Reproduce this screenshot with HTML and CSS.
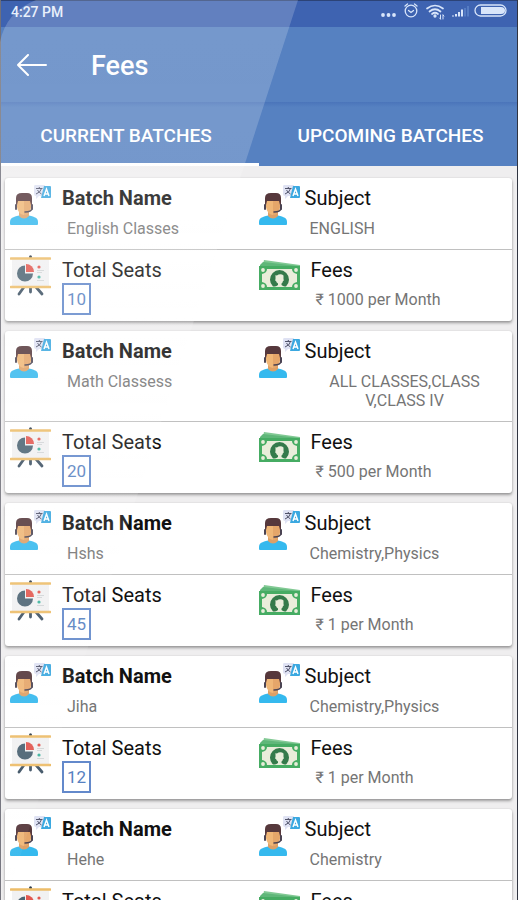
FILE: index.html
```html
<!DOCTYPE html>
<html lang="en">
<head>
<meta charset="utf-8">
<meta name="viewport" content="width=device-width, initial-scale=1">
<title>Fees</title>
<link rel="stylesheet" href="styles.css">
</head>
<body>
<svg class="sprite" aria-hidden="true">
  <symbol id="tutor" viewBox="0 0 41 41">
    <path d="M0 39v-2c0-4 3-5 9-6.500h10c6 1.500 9 2.500 9 6.500v2q0 1-1 1H1q-1 0-1-1z" fill="#35b9ee"/>
    <path d="M9 26h10v5q-5 5-10 0z" fill="#dda066"/>
    <path d="M7 14h14v8q-1 7-7 8-6-1-7-8z" fill="#f0b777"/>
    <path d="M14 13h7v9q-1 7-7 8z" fill="#e5a66a"/>
    <path d="M6 20V13q0-5 6-5h5q5 0 5 5v7h-1l-1-4H8l-1 4z" fill="#56383c"/>
    <rect x="5" y="19" width="2" height="6" rx="1" fill="#4b4453"/>
    <rect x="21" y="19" width="2" height="6" rx="1" fill="#4b4453"/>
    <path d="M22 23q0 4-7 4" fill="none" stroke="#4b4453" stroke-width="1.500" stroke-linecap="round"/>
    <path d="M25 0h10l-3 11h-3l-3 3v-3q-2 0-2-2V2q0-2 1-2z" fill="#dfe2f3"/>
    <path d="M34 1h6q1 0 1 1v10q0 1-1 1H31z" fill="#3ba8e0"/>
    <path d="M26 3.500h6.500M29.300 2v1.500M31.500 3.500q-1 4-5.500 5.500M27.500 5q2 3 4 4" fill="none" stroke="#50536a"/>
    <path d="M34 11l2.500-7L39 11M35 9h3" fill="none" stroke="#fff" stroke-width="1.400"/>
  </symbol>
  <symbol id="board" viewBox="0 0 41 41">
    <path d="M14 32l-5 7M26 32l6 7M20.500 32v5" stroke="#3d5163" stroke-width="2.800" stroke-linecap="round"/>
    <circle cx="20.500" cy="1.800" r="1.500" fill="#2f3c48"/>
    <path d="M2 4h37v27H2z" fill="#f1f1f2"/>
    <path d="M1 3.500h39M1 32h39" stroke="#edbd69" stroke-width="2.600" stroke-linecap="round"/>
    <path d="M15 10.500v8h8a8 8 0 1 1-8-8z" fill="#4c6473"/>
    <path d="M16 9a8 8 0 0 1 8 8h-8z" fill="#e2574f"/>
    <circle cx="29" cy="12" r="1.600" fill="#e2574f"/>
    <circle cx="29" cy="22" r="1.600" fill="#3db39e"/>
    <path d="M27 15.500h7M27 17.500h5M27 25.500h7" stroke="#d2d5d7"/>
  </symbol>
  <symbol id="cash" viewBox="0 0 41 41">
    <path d="M5 5l36 5v4H3z" fill="#82c994"/>
    <path d="M1 10l3-3 36 4v3H1z" fill="#5fb779"/>
    <path d="M0 11h41v24H0z" fill="#46ac63"/>
    <path d="M8 14h25q0 4 5 5v8q-5 1-5 5H8q0-4-5-5v-8q5-1 5-5z" fill="#e9edda"/>
    <g fill="#e9edda"><circle cx="4" cy="15" r="1.900"/><circle cx="37" cy="15" r="1.900"/><circle cx="4" cy="31" r="1.900"/><circle cx="37" cy="31" r="1.900"/></g>
    <path d="M14 31.500a9.500 9.500 0 1 1 13 0z" fill="#347a4a"/>
    <path d="M16.500 20q1 1 3-.5 3-1 5 1v3.500q1 2-.5 2-.5 2-1.500 2.500v1.500l3 2H16l3-2v-1.500q-1.500-1-2-2.500-1.500 0-.5-2z" fill="#e9edda"/>
  </symbol>
</svg>
<div class="app">
  <div class="status">
    <span>4:27 PM</span>
    <svg class="status-icons" viewBox="0 0 128 20" fill="none" stroke="#d8e5fa" stroke-width="1.300" stroke-linecap="round" aria-hidden="true">
      <g fill="#d8e5fa" stroke="none"><circle cx="3" cy="11" r="1.900"/><circle cx="8.500" cy="11" r="1.900"/><circle cx="14" cy="11" r="1.900"/></g>
      <circle cx="31" cy="7" r="5.800"/><path d="M28.500 6.500l2.500 2 2.500-2M25 2l2.500-2M37 2l-2.500-2"/>
      <path d="M47 4.500q8-6 16 0M49.500 7.500q5.500-4.500 11 0M52 10q3-2.500 6 0" stroke-width="1.700"/><circle cx="55" cy="12" r="1" fill="#d8e5fa"/>
      <path d="M60.500 11v4M59.500 14l1 1M63 15v-4M64 12l-1-1" stroke-width="1"/>
      <path d="M73 12.500V11.500M76 12.500V10M79 12.500V8M82 12.500V5.500" stroke-width="2" stroke-linecap="butt"/><path d="M85 12.500V4M88 12.500V2" stroke="#557cc3" stroke-width="2" stroke-linecap="butt"/>
      <rect x="95" y="1" width="31" height="11" rx="5.500"/><path d="M101 3h20q4 0 4 3.500t-4 3.500h-20z" fill="#d8e5fa" stroke="none"/>
    </svg>
  </div>
  <header class="toolbar">
    <button class="back" type="button" aria-label="Back"><svg viewBox="0 0 30 22" fill="none" stroke="#fff" stroke-width="2" stroke-linecap="round" stroke-linejoin="round"><path d="M11 1L1 11l10 10M1 11h28"/></svg></button>
    <h1>Fees</h1>
  </header>
  <nav class="tabs" aria-label="Batches">
    <button class="tab active" type="button">CURRENT BATCHES</button>
    <button class="tab" type="button">UPCOMING BATCHES</button>
  </nav>
  <main class="list">
    <article class="card">
      <section class="cell"><svg class="icon"><use href="#tutor"/></svg><div class="text"><h2 class="name">Batch Name</h2><p>English Classes</p></div></section>
      <section class="cell subject"><svg class="icon"><use href="#tutor"/></svg><div class="text"><h2>Subject</h2><p>ENGLISH</p></div></section>
      <section class="cell lower"><svg class="icon"><use href="#board"/></svg><div class="text"><h2>Total Seats</h2><span class="seats">10</span></div></section>
      <section class="cell lower fees"><svg class="icon"><use href="#cash"/></svg><div class="text"><h2>Fees</h2><p>₹ 1000 per Month</p></div></section>
    </article>
    <article class="card">
      <section class="cell"><svg class="icon"><use href="#tutor"/></svg><div class="text"><h2 class="name">Batch Name</h2><p>Math Classess</p></div></section>
      <section class="cell subject"><svg class="icon"><use href="#tutor"/></svg><div class="text"><h2>Subject</h2><p class="many">ALL CLASSES,CLASS V,CLASS IV</p></div></section>
      <section class="cell lower"><svg class="icon"><use href="#board"/></svg><div class="text"><h2>Total Seats</h2><span class="seats">20</span></div></section>
      <section class="cell lower fees"><svg class="icon"><use href="#cash"/></svg><div class="text"><h2>Fees</h2><p>₹ 500 per Month</p></div></section>
    </article>
    <article class="card">
      <section class="cell"><svg class="icon"><use href="#tutor"/></svg><div class="text"><h2 class="name">Batch Name</h2><p>Hshs</p></div></section>
      <section class="cell subject"><svg class="icon"><use href="#tutor"/></svg><div class="text"><h2>Subject</h2><p>Chemistry,Physics</p></div></section>
      <section class="cell lower"><svg class="icon"><use href="#board"/></svg><div class="text"><h2>Total Seats</h2><span class="seats">45</span></div></section>
      <section class="cell lower fees"><svg class="icon"><use href="#cash"/></svg><div class="text"><h2>Fees</h2><p>₹ 1 per Month</p></div></section>
    </article>
    <article class="card">
      <section class="cell"><svg class="icon"><use href="#tutor"/></svg><div class="text"><h2 class="name">Batch Name</h2><p>Jiha</p></div></section>
      <section class="cell subject"><svg class="icon"><use href="#tutor"/></svg><div class="text"><h2>Subject</h2><p>Chemistry,Physics</p></div></section>
      <section class="cell lower"><svg class="icon"><use href="#board"/></svg><div class="text"><h2>Total Seats</h2><span class="seats">12</span></div></section>
      <section class="cell lower fees"><svg class="icon"><use href="#cash"/></svg><div class="text"><h2>Fees</h2><p>₹ 1 per Month</p></div></section>
    </article>
    <article class="card">
      <section class="cell"><svg class="icon"><use href="#tutor"/></svg><div class="text"><h2 class="name">Batch Name</h2><p>Hehe</p></div></section>
      <section class="cell subject"><svg class="icon"><use href="#tutor"/></svg><div class="text"><h2>Subject</h2><p>Chemistry</p></div></section>
      <section class="cell lower"><svg class="icon"><use href="#board"/></svg><div class="text"><h2>Total Seats</h2></div></section>
      <section class="cell lower fees"><svg class="icon"><use href="#cash"/></svg><div class="text"><h2>Fees</h2></div></section>
    </article>
  </main>
</div>
<svg class="glare" viewBox="0 0 518 900" preserveAspectRatio="none" aria-hidden="true">
  <defs><linearGradient id="shine" x1="0" y1="0" x2="0" y2="1"><stop offset="0" stop-color="#fff" stop-opacity=".19"/><stop offset=".25" stop-color="#fff" stop-opacity=".18"/><stop offset="1" stop-color="#fff" stop-opacity=".04"/></linearGradient></defs>
  <path d="M36 0H298L6 900H0V42Q6 12 36 0z" fill="url(#shine)"/>
</svg>
</body>
</html>
```
FILE: styles.css
```css
* { box-sizing: border-box; }
body { margin: 0; font-family: Roboto, "Noto Sans", sans-serif; color: #111; }
h1, h2, p { margin: 0; }
button { border: 0; padding: 0; background: none; color: #fff; font-family: inherit; cursor: pointer; }
.sprite { position: absolute; width: 0; height: 0; }

.app {
  display: flex;
  flex-direction: column;
  height: 100vh;
  overflow: hidden;
  background: #efeeef;
  border-left: 1px solid #70707a;
  border-right: 1px solid #303440;
}

.status {
  display: flex;
  justify-content: space-between;
  flex: none;
  height: 27px;
  padding: 3px 9px 0 10px;
  border-top: 1px solid #2c4377;
  background: #3e63b1;
  color: #e4edfb;
  font-size: 14px;
  font-weight: 500;
  line-height: 16px;
}
.status-icons { width: 128px; height: 20px; overflow: visible; }

.toolbar {
  display: flex;
  align-items: center;
  flex: none;
  gap: 44px;
  height: 75px;
  padding: 2px 16px 0;
  background: #5681c1;
  color: #fff;
}
.toolbar h1 { font-size: 27px; font-weight: 500; line-height: 32px; }
.back { display: flex; padding-bottom: 2px; }
.back svg { width: 30px; height: 22px; }

.tabs {
  display: grid;
  grid-template-columns: 1fr 1fr;
  flex: none;
  height: 64px;
  background: linear-gradient(#4a74ba, #5681c1 5px);
}
.tab {
  padding: 5px 0 0 5px;
  border-bottom: 3px solid transparent;
  font-size: 19px;
  font-weight: 500;
}
.tab.active { padding: 5px 8px 0 0; border-bottom-color: #fff; }

.list {
  display: flex;
  flex-direction: column;
  flex: 1;
  gap: 10px;
  min-height: 0;
  padding: 12px 5px 12px 4px;
  overflow-y: auto;
  scrollbar-width: none;
}
.card {
  display: grid;
  grid-template-columns: 1fr 1fr;
  flex: none;
  border-radius: 3px;
  background: #fff;
  box-shadow: 0 2px 3px rgba(0, 0, 0, .35), 0 0 2px rgba(0, 0, 0, .12);
}
.cell {
  display: flex;
  gap: 11px;
  min-height: 71px;
  padding: 7px 0 0 5px;
}
.subject { gap: 5px; padding-left: 0; }
.lower { min-height: 72px; padding-top: 5px; border-top: 1px solid #c0c0c0; }
.fees { gap: 11px; padding-left: 0; }
.icon { flex: none; width: 41px; height: 41px; }
.text { flex: 1; padding: 1px 0 6px; }
.lower .text { padding-top: 3px; }
.text h2 { font-size: 20px; font-weight: 400; line-height: 24px; }
.text .name { font-weight: 700; }
.text p { margin-top: 9px; padding: 0 5px 5px; color: #757575; font-size: 16px; line-height: 19px; }
.lower p { margin-top: 8px; }
.text .many { max-width: 200px; padding-inline: 0; text-align: center; }
.seats {
  display: inline-block;
  margin-top: 1px;
  padding: 0 3px;
  border: 2px solid #6389cb;
  color: #5681c1;
  font-size: 17px;
  line-height: 28px;
  vertical-align: top;
}

.glare { position: fixed; inset: 0; width: 100%; height: 100%; pointer-events: none; }
```
